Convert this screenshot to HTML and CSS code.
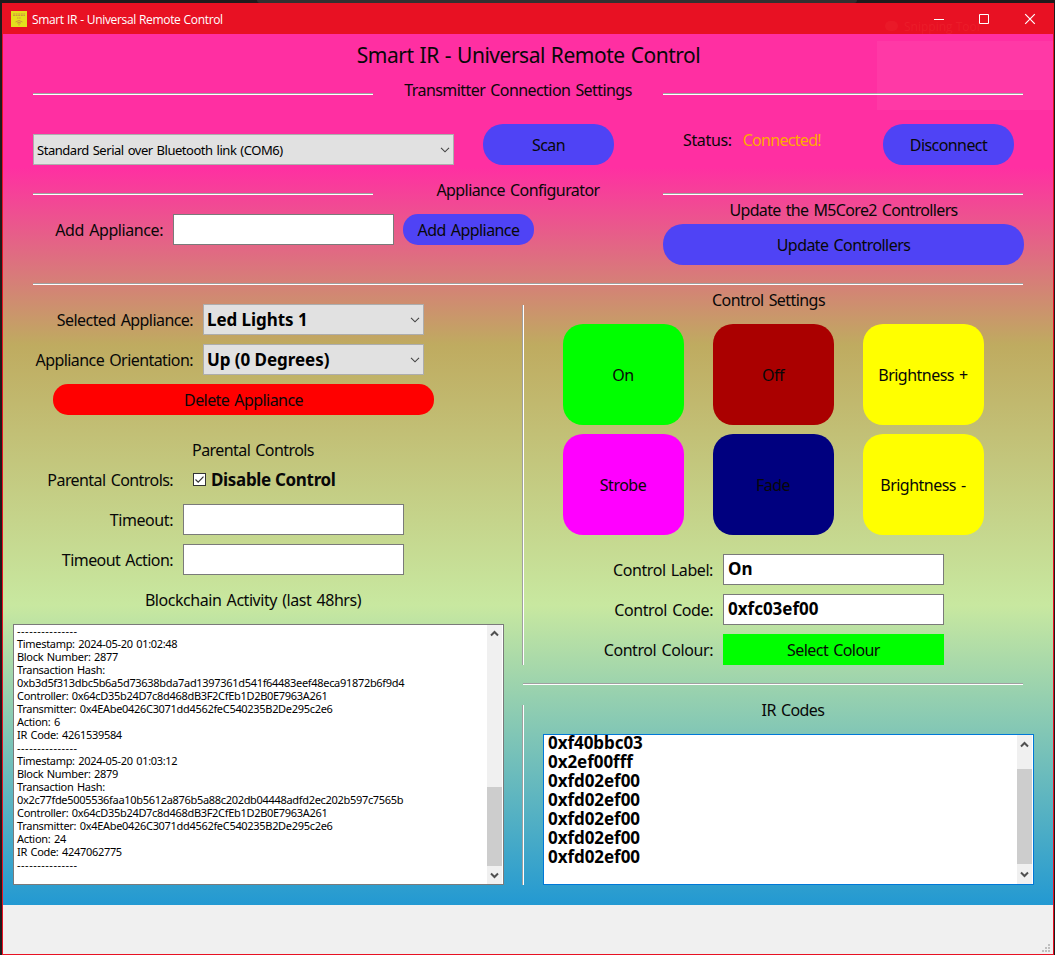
FILE: index.html
```html
<!DOCTYPE html>
<html lang="en">
<head>
<meta charset="utf-8">
<title>Smart IR - Universal Remote Control</title>
<link rel="stylesheet" href="styles.css">
</head>
<body>
<div class="desktop-tab"></div>
<main class="window">
  <header class="titlebar">
    <svg class="app-icon" width="16" height="16" viewBox="0 0 16 16"><rect width="16" height="16" fill="#e3e01c"/><g stroke="#cf9440" fill="none"><path d="M2 3h12M2 4.500h12" stroke-dasharray="2 .6"/><path d="M6 7h4" stroke-dasharray="1.5 .6"/><path d="M4.500 11q3.500-3 7 0M6 12.200q2-2 4 0M8 11v3.500"/></g></svg>
    <span class="caption">Smart IR - Universal Remote Control</span>
    <svg class="win-controls" width="103" height="12" viewBox="0 0 103 12" fill="none" stroke="#fff"><path d="M0 6.500h10"/><path d="M45.500 1.500h9v9h-9z"/><path d="M91.200 1.200l9.600 9.600M100.800 1.200l-9.600 9.600" stroke-width="1.200"/></svg>
  </header>
  <section class="content">
    <h1 class="title">Smart IR - Universal Remote Control</h1>
    <div class="heading-row"><i class="rule"></i><h2>Transmitter Connection Settings</h2><i class="rule"></i></div>
    <div class="connection">
      <div class="combo combo-port"><span>Standard Serial over Bluetooth link (COM6)</span><svg width="10" height="6" viewBox="0 0 10 6"><path d="M1 .8l4 4 4-4"/></svg></div>
      <button class="pill scan">Scan</button>
      <div class="status"><span>Status:</span><span class="status-value">Connected!</span></div>
      <button class="pill">Disconnect</button>
    </div>
    <div class="heading-row"><i class="rule"></i><h2>Appliance Configurator</h2><i class="rule"></i></div>
    <div class="configure">
      <label class="add-label wide">Add Appliance:</label>
      <div class="field"></div>
      <button class="pill small">Add Appliance</button>
      <div class="update"><h2>Update the M5Core2 Controllers</h2><button class="pill">Update Controllers</button></div>
    </div>
    <i class="rule full"></i>
    <div class="columns">
      <div class="left">
        <div class="form appliance">
          <label>Selected Appliance:</label>
          <div class="combo"><b>Led Lights 1</b><svg width="10" height="6" viewBox="0 0 10 6"><path d="M1 .8l4 4 4-4"/></svg></div>
          <label>Appliance Orientation:</label>
          <div class="combo"><b>Up (0 Degrees)</b><svg width="10" height="6" viewBox="0 0 10 6"><path d="M1 .8l4 4 4-4"/></svg></div>
        </div>
        <button class="pill small delete">Delete Appliance</button>
        <h2 class="parental-title">Parental Controls</h2>
        <div class="form parental">
          <label>Parental Controls:</label>
          <div class="check"><svg width="13" height="13" viewBox="0 0 13 13"><rect x=".5" y=".5" width="12" height="12" fill="#fff" stroke="#333"/><path d="M2.500 6.500l2.700 2.700 5.300-5.600" fill="none" stroke="#333" stroke-width="1.200"/></svg><b>Disable Control</b></div>
          <label class="wide">Timeout:</label><div class="field"></div>
          <label>Timeout Action:</label><div class="field"></div>
        </div>
        <h2 class="log-title">Blockchain Activity (last 48hrs)</h2>
        <div class="box log">
          <pre><span class="dash">---------------</span>
Timestamp: 2024-05-20 01:02:48
Block Number: 2877
Transaction Hash:
0xb3d5f313dbc5b6a5d73638bda7ad1397361d541f64483eef48eca91872b6f9d4
Controller: 0x64cD35b24D7c8d468dB3F2CfEb1D2B0E7963A261
Transmitter: 0x4EAbe0426C3071dd4562feC540235B2De295c2e6
Action: 6
IR Code: 4261539584
<span class="dash">---------------</span>
Timestamp: 2024-05-20 01:03:12
Block Number: 2879
Transaction Hash:
0x2c77fde5005536faa10b5612a876b5a88c202db04448adfd2ec202b597c7565b
Controller: 0x64cD35b24D7c8d468dB3F2CfEb1D2B0E7963A261
Transmitter: 0x4EAbe0426C3071dd4562feC540235B2De295c2e6
Action: 24
IR Code: 4247062775
<span class="dash">---------------</span></pre>
          <div class="scroll"><svg width="9" height="7" viewBox="0 0 9 7"><path d="M1 5.500l3.500-3.500 3.500 3.500"/></svg><i class="thumb"></i><svg width="9" height="7" viewBox="0 0 9 7"><path d="M1 1.500l3.500 3.500 3.500-3.500"/></svg></div>
        </div>
      </div>
      <div class="dividers"><i></i><i></i></div>
      <div class="right">
        <h2 class="settings-title">Control Settings</h2>
        <div class="remote">
          <button class="on">On</button><button class="off">Off</button><button class="bright">Brightness +</button>
          <button class="strobe">Strobe</button><button class="fade">Fade</button><button class="bright">Brightness -</button>
        </div>
        <div class="form control">
          <label class="wide">Control Label:</label><div class="field"><b>On</b></div>
          <label class="wide">Control Code:</label><div class="field"><b>0xfc03ef00</b></div>
          <label class="wide">Control Colour:</label><button class="colour">Select Colour</button>
        </div>
        <i class="rule mid"></i>
        <h2 class="ir-title">IR Codes</h2>
        <div class="box codes">
          <pre>0xf40bbc03
0x2ef00fff
0xfd02ef00
0xfd02ef00
0xfd02ef00
0xfd02ef00
0xfd02ef00</pre>
          <div class="scroll"><svg width="9" height="7" viewBox="0 0 9 7"><path d="M1 5.500l3.500-3.500 3.500 3.500"/></svg><i class="thumb"></i><svg width="9" height="7" viewBox="0 0 9 7"><path d="M1 1.500l3.500 3.500 3.500-3.500"/></svg></div>
        </div>
      </div>
    </div>
  </section>
  <footer class="statusbar"><svg width="8" height="8" viewBox="0 0 8 8" fill="#bfbfbf"><path d="M6 0h2v2H6zM3 3h2v2H3zM6 3h2v2H6zM0 6h2v2H0zM3 6h2v2H3zM6 6h2v2H6z"/></svg></footer>
  <div class="toast-ghost"><div class="ghost-head"><i></i>Snipping Tool</div><div class="ghost-body"></div></div>
</main>
</body>
</html>
```
FILE: styles.css
```css
* { box-sizing: border-box; }
body { margin: 0; width: 1055px; height: 955px; overflow: hidden; background: #1f1b1c; padding: 3px 1px 0 2px; font-family: "Noto Sans", sans-serif; font-size: 16px; color: #080808; position: relative; }
h1, h2, pre { margin: 0; font-weight: 400; font-size: inherit; font-family: inherit; }
button { border: 0; padding: 0; font: inherit; color: inherit; white-space: nowrap; }
h2, label { line-height: 20px; text-align: center; display: block; white-space: nowrap; }
h2, label, button, .status { letter-spacing: -.57px; word-spacing: 1.5px; }
.wide { letter-spacing: -.42px; }
i { display: block; }
svg { display: block; flex: none; }
b { font-size: 17px; letter-spacing: -.33px; }
.desktop-tab { position: absolute; top: 0; left: 257px; width: 600px; height: 3px; background: #333030; border-radius: 0 0 4px 4px; }
.window { position: relative; width: 1052px; height: 952px; border: 1px solid #e81123; display: flex; flex-direction: column; }
.titlebar { height: 30px; background: #e81123; color: #fff; display: flex; align-items: center; padding: 0 16px 0 8px; font: 12px "Open Sans", sans-serif; }
.caption { margin-left: 5px; flex: 1; letter-spacing: -.35px; word-spacing: .4px; }
.content { height: 871px; background: linear-gradient(#ff2fa2 0, #ff2fa2 15.300%, #bfab60 35.700%, #c8e8a0 65.600%, #2399d2 100%); }
.title { height: 46px; line-height: 43px; font-size: 21px; text-align: center; letter-spacing: -.48px; word-spacing: 1px; padding-left: 1px; }
.heading-row { display: grid; grid-template-columns: 340px 290px 360px; height: 20px; margin-left: 30px; }
.rule { border-top: 1px solid #a0a0a0; border-bottom: 1px solid #fff; height: 2px; }
.heading-row .rule { margin-top: 13px; }
.connection { display: flex; align-items: flex-start; padding: 24px 0 0 30px; height: 80px; }
.combo { display: flex; align-items: center; justify-content: space-between; width: 221px; height: 31px; border: 1px solid #adadad; background: #e1e1e1; padding: 0 3px; color: #000; white-space: nowrap; }
.combo svg { fill: none; stroke: #444; stroke-width: 1.100; }
.combo-port { width: 421px; margin-top: 10px; font-size: 13px; letter-spacing: -.47px; word-spacing: 1px; }
.pill { width: 131px; height: 41px; border-radius: 20px; background: #4f43f5; }
.pill.small { height: 31px; border-radius: 15px; }
.scan { margin-left: 29px; }
.status { display: flex; gap: 11px; width: 200px; margin: 6px 0 0 69px; line-height: 20px; }
.status span:first-child { letter-spacing: -.35px; }
.status-value { color: #ffaa00; letter-spacing: -.7px; }
.configure { display: flex; padding-top: 14px; height: 83px; }
.add-label { width: 160px; text-align: right; margin: 6px 10px 0 0; }
.field { width: 221px; height: 31px; border: 1px solid #7a7a7a; background: #fff; color: #000; padding-left: 4px; line-height: 28px; }
.configure > .pill { margin-left: 9px; }
.update { margin: -14px 0 0 129px; width: 361px; }
.update h2 { margin: 0 0 4px; letter-spacing: -.65px; }
.update .pill { width: 361px; }
.rule.full { width: 990px; margin-left: 30px; }
.columns { display: flex; height: 600px; }
.left { width: 519px; padding-top: 19px; }
.form { display: grid; row-gap: 9px; column-gap: 10px; align-items: center; }
.form label { text-align: right; }
.appliance { grid-template-columns: 190px 221px; }
.appliance b { letter-spacing: -.05px; }
.delete { display: block; width: 381px; margin: 9px 0 0 50px; background: #f00; }
.parental-title { width: 500px; margin: 25px 0 4px; }
.parental { grid-template-columns: 170px 221px; }
.check { height: 31px; display: flex; align-items: center; gap: 5px; padding-left: 10px; }
.log-title { width: 500px; margin-top: 15px; letter-spacing: -.45px; }
.box { width: 491px; border: 1px solid #7a7a7a; background: #fff; color: #000; display: flex; justify-content: space-between; overflow: hidden; }
.log { height: 261px; margin: 14px 0 0 10px; }
.log pre { font-size: 11px; line-height: 13px; padding-left: 3px; letter-spacing: -.31px; word-spacing: 1px; margin-top: -1px; }
.dash { letter-spacing: .5px; }
.scroll { width: 16px; background: #f0f0f0; border-right: 1px solid #fff; display: grid; justify-items: center; align-items: center; }
.scroll svg { fill: none; stroke: #505050; stroke-width: 2; }
.scroll svg:last-child { grid-row: 4; }
.thumb { width: 15px; height: 100%; background: #cdcdcd; grid-row: 3; }
.log .scroll { grid-template-rows: 17px 145px 79px 18px; }
.codes .scroll { grid-template-rows: 18px 16px 95px 20px; }
.dividers i { width: 2px; height: 360px; margin-top: 20px; border-left: 1px solid #a0a0a0; border-right: 1px solid #fff; }
.dividers i + i { height: 180px; margin-top: 40px; }
.right { width: 529px; }
.settings-title { width: 489px; margin-top: 5px; }
.remote { display: grid; grid-template-columns: repeat(3, 121px); grid-auto-rows: 101px; gap: 9px 29px; margin: 14px 0 19px 39px; }
.remote button { border-radius: 20px; letter-spacing: -.52px; padding-right: 1px; }
.on, .colour { background: #0f0; }
.off { background: #a00; }
.bright { background: #ff0; }
.strobe { background: #f0f; }
.fade { background: #00007f; }
.control { grid-template-columns: 189px 221px; }
.control b { letter-spacing: 0; }
.colour { height: 31px; }
.rule.mid { width: 500px; margin: 18px 0 15px -1px; }
.ir-title { width: 538px; }
.codes { height: 151px; margin: 14px 0 0 19px; border-color: #0078d7; }
.codes pre { font-size: 17px; font-weight: 700; line-height: 19px; margin-top: -2px; padding-left: 4px; letter-spacing: -.05px; }
.statusbar { flex: 1; background: #f0f0f0; display: flex; align-items: flex-end; justify-content: flex-end; padding: 0 3px 2px 0; }
.toast-ghost { position: absolute; right: 0; top: 14px; width: 176px; font: 12px "Open Sans", sans-serif; color: rgba(255, 90, 80, .17); }
.ghost-head { height: 23px; display: flex; gap: 6px; padding-left: 8px; }
.ghost-head i { width: 13px; height: 10px; margin-top: 3px; border-radius: 5px; background: rgba(255, 100, 90, .1); }
.ghost-body { height: 69px; background: rgba(255, 255, 255, .05); }
```
